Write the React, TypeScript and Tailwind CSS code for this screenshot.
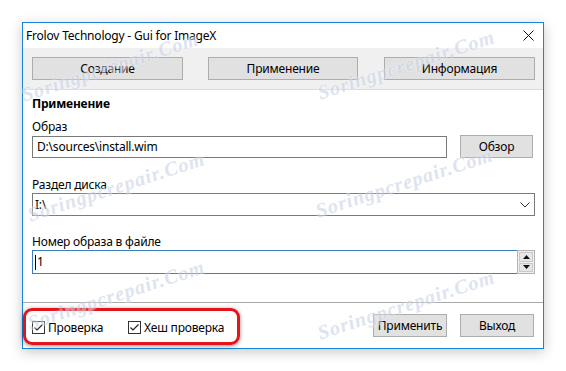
const FONT = { fontFamily: '"Noto Sans", "Open Sans", sans-serif' }

const MARKS = [
  { x: 22, y: 40 },
  { x: 318, y: 38 },
  { x: 28, y: 160 },
  { x: 316, y: 156 },
  { x: 28, y: 268 },
  { x: 318, y: 278 },
]

function CheckBox({ label }: { label: string }) {
  return (
    <div className="flex items-center gap-[3px]">
      <svg width="13" height="13" viewBox="0 0 13 13">
        <rect x="0.5" y="0.5" width="12" height="12" fill="#fff" stroke="#333" />
        <path d="M2.5 6.5 L5 9 L10.5 3.5" fill="none" stroke="#222" strokeWidth="1.2" />
      </svg>
      <span className="text-[12px] text-black leading-none">{label}</span>
    </div>
  )
}

function Btn({ label, w }: { label: string; w: string }) {
  return (
    <div
      className={`${w} h-[23px] flex items-center justify-center border border-[#adadad] bg-[#e1e1e1] text-[12px] text-black`}
    >
      {label}
    </div>
  )
}

export default function App() {
  return (
    <div
      className="relative w-[566px] h-[371px] bg-white overflow-hidden pt-[22px] pl-[22px] tracking-[-0.2px]"
      style={FONT}
    >
      <div className="w-[522px] h-[327px] border border-[#1883d7] bg-white flex flex-col shadow-[0_3px_12px_rgba(0,0,0,0.22)]">
        {/* title bar */}
        <div className="h-[25px] flex items-center justify-between pl-[3px] pr-[9px] text-[12px] text-black">
          <span>Frolov Technology - Gui for ImageX</span>
          <svg width="11" height="11" viewBox="0 0 11 11">
            <path d="M0.5 0.5 L10.5 10.5 M10.5 0.5 L0.5 10.5" stroke="#111" strokeWidth="1" />
          </svg>
        </div>

        {/* tab buttons */}
        <div className="h-[42px] bg-[#f0f0f0] flex items-start pt-[9px] pl-[9px] border-b border-[#dadada]">
          <Btn label="Создание" w="w-[151px]" />
          <div className="ml-[25px]">
            <Btn label="Применение" w="w-[150px]" />
          </div>
          <div className="ml-[26px]">
            <Btn label="Информация" w="w-[151px]" />
          </div>
        </div>

        {/* content */}
        <div className="h-[213px] flex flex-col pl-[9px] pr-[8px] text-[12px] text-black border-b border-[#a9a9a9]">
          <div className="mt-[6px] h-[16px] leading-[16px] font-bold">Применение</div>
          <div className="mt-[7px] h-[16px] leading-[16px]">Образ</div>
          <div className="mt-[1px] flex items-start">
            <div className="w-[415px] h-[22px] border border-[#7a7a7a] flex items-center pl-[4px]">
              D:\sources\install.wim
            </div>
            <div className="ml-[13px] -mt-[1px]">
              <Btn label="Обзор" w="w-[73px]" />
            </div>
          </div>
          <div className="mt-[19px] h-[16px] leading-[16px]">Раздел диска</div>
          <div className="w-[503px] h-[23px] border border-[#7a7a7a] flex items-center justify-between pl-[2px] pr-[4px]">
            <span>I:\</span>
            <svg width="10" height="6" viewBox="0 0 10 6">
              <path d="M0.5 0.5 L5 5 L9.5 0.5" fill="none" stroke="#333" strokeWidth="1" />
            </svg>
          </div>
          <div className="mt-[18px] h-[16px] leading-[16px]">Номер образа в файле</div>
          <div className="flex items-stretch h-[24px]">
            <div className="w-[485px] border border-r-0 border-[#3e80bd] flex items-center pl-[2px]">
              <span className="w-[1px] h-[15px] bg-black mr-[1px]" />
              <span>1</span>
            </div>
            <div className="w-[18px] border border-[#b4b4b4] bg-[#f0f0f0] flex flex-col p-[1px] gap-[1px]">
              <div className="flex-1 border border-[#c9c9c9] bg-[#e6e6e6] flex items-center justify-center">
                <svg width="7" height="4" viewBox="0 0 7 4">
                  <path d="M0 4 L3.5 0 L7 4 Z" fill="#111" />
                </svg>
              </div>
              <div className="flex-1 border border-[#c9c9c9] bg-[#e6e6e6] flex items-center justify-center">
                <svg width="7" height="4" viewBox="0 0 7 4">
                  <path d="M0 0 L3.5 4 L7 0 Z" fill="#111" />
                </svg>
              </div>
            </div>
          </div>
        </div>

        {/* bottom bar */}
        <div className="flex-1 flex items-start text-[12px] text-black">
          <div className="mt-[5px] w-[217px] h-[37px] border-[3px] border-[#e5141b] rounded-[9px] flex items-center pl-[6px] pt-[2px] shadow-[0_1px_4px_rgba(0,0,0,0.45)]">
            <CheckBox label="Проверка" />
            <div className="ml-[25px]">
              <CheckBox label="Хеш проверка" />
            </div>
          </div>
          <div className="ml-auto mt-[11px] mr-[9px] flex gap-[13px]">
            <Btn label="Применить" w="w-[74px]" />
            <Btn label="Выход" w="w-[74px]" />
          </div>
        </div>
      </div>

      {/* watermark overlay */}
      {MARKS.map((m, i) => (
        <div
          key={i}
          className="absolute pointer-events-none select-none text-[20px] italic font-bold tracking-[1px] text-[#c9d2e6] opacity-60 -rotate-[18deg] origin-left whitespace-nowrap"
          style={{
            left: m.x,
            top: m.y + 40,
            fontFamily: '"Liberation Serif", serif',
            textShadow: '0 0 2px #fff, 0 0 2px #fff',
          }}
        >
          Soringpcrepair.Com
        </div>
      ))}
    </div>
  )
}
